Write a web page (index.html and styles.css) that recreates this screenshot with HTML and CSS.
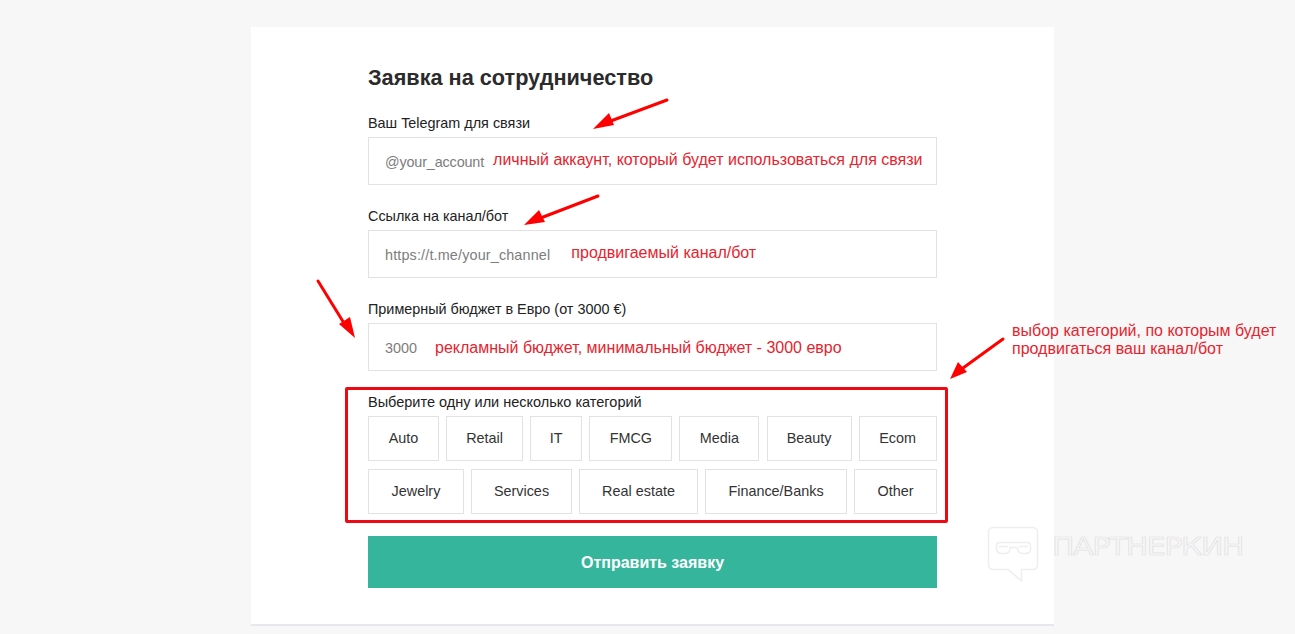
FILE: index.html
```html
<!DOCTYPE html>
<html lang="ru">
<head>
<meta charset="utf-8">
<title>Заявка на сотрудничество</title>
<link rel="stylesheet" href="styles.css">
</head>
<body>
<main class="card">
  <form class="form">
    <h1 class="title">Заявка на сотрудничество</h1>
    <div class="field">
      <div class="label">Ваш Telegram для связи</div>
      <div class="input"><span class="ph ph-account">@your_account</span><span class="note note-high">личный аккаунт, который будет использоваться для связи</span></div>
    </div>
    <div class="field">
      <div class="label">Ссылка на канал/бот</div>
      <div class="input"><span class="ph ph-channel">https://t.me/your_channel</span><span class="note note-high">продвигаемый канал/бот</span></div>
    </div>
    <div class="field">
      <div class="label">Примерный бюджет в Евро (от 3000 €)</div>
      <div class="input"><span class="ph ph-budget">3000</span><span class="note">рекламный бюджет, минимальный бюджет - 3000 евро</span></div>
    </div>
    <div class="cats">
      <div class="label label-cats">Выберите одну или несколько категорий</div>
      <div class="chips">
        <span class="chip c-auto">Auto</span><span class="chip c-retail">Retail</span><span class="chip c-it">IT</span><span class="chip c-fmcg">FMCG</span><span class="chip c-media">Media</span><span class="chip c-beauty">Beauty</span><span class="chip c-ecom">Ecom</span>
      </div>
      <div class="chips">
        <span class="chip c-jewelry">Jewelry</span><span class="chip c-services">Services</span><span class="chip c-estate">Real estate</span><span class="chip c-finance">Finance/Banks</span><span class="chip c-other">Other</span>
      </div>
    </div>
    <div class="submit">Отправить заявку</div>
  </form>
</main>

<div class="redbox"></div>
<svg class="arrows" width="1295" height="634" viewBox="0 0 1295 634" aria-hidden="true">
  <g class="arrow-line">
    <line x1="667" y1="100" x2="608" y2="122"/>
    <line x1="598" y1="196" x2="538" y2="219"/>
    <line x1="318" y1="281" x2="347" y2="328"/>
    <line x1="1003" y1="339" x2="963" y2="368"/>
  </g>
  <g class="arrow-head">
    <polygon points="593,129 609,113 614,125"/>
    <polygon points="524,225 539,210 545,222"/>
    <polygon points="355,338 339,324 350,317"/>
    <polygon points="950,379 958,362 967,372"/>
  </g>
  <g class="wm-line">
    <path d="M993 527.500H1033a4.500 4.500 0 0 1 4.500 4.500V565a4.500 4.500 0 0 1-4.500 4.500H1021.500V581L1008 569.500H993a4.500 4.500 0 0 1-4.500-4.500V532a4.500 4.500 0 0 1 4.500-4.500Z"/>
    <path d="M996.500 546q0-3.500 3.500-3.500H1027q3.500 0 3.500 3.500v3q0 4.500-5 4.500h-3q-5 0-5-6H1010q0 6-5 6h-3q-5.500 0-5.500-4.500Z"/>
    <path d="M999 546.500H1008M1019 546.500H1028"/>
  </g>
</svg>
<div class="wm-text">ПАРТНЕРКИН</div>
<div class="side-note">выбор категорий, по которым будет<br>продвигаться ваш канал/бот</div>
</body>
</html>
```
FILE: styles.css
```css
* { box-sizing: border-box; }
html, body { height: 100%; }
body {
  margin: 0;
  height: 634px;
  overflow: hidden;
  background: #f7f7f7;
  font-family: "Liberation Sans", Arial, sans-serif;
  color: #222;
}
.card {
  width: 803px;
  height: 599px;
  margin: 27px 0 0 251px;
  padding: 37px 117px 0;
  background: #fff;
  border-bottom: 2px solid #e8e8ec;
}
.form { width: 569px; display: flex; flex-direction: column; }
.title {
  margin: 0;
  height: 28px;
  font-size: 21.700px;
  line-height: 28px;
  font-weight: 700;
  color: #2b2b2b;
}
.field { height: 93px; padding-top: 22px; }
.label {
  height: 18px;
  font-size: 14.400px;
  line-height: 18px;
  color: #222;
  margin-bottom: 5px;
}
.input {
  height: 48px;
  border: 1px solid #e2e2e2;
  display: flex;
  align-items: center;
  padding: 2px 0 0 16px;
  background: #fff;
}
.ph { font-size: 14.400px; color: #7d7d7d; }
.ph-account { margin-right: 9px; letter-spacing: -0.15px; }
.ph-channel { margin-right: 21px; letter-spacing: 0.15px; }
.ph-budget { margin-right: 18px; }
.note { font-size: 16px; color: #e8232e; }
.note-high { margin-bottom: 4px; }
.cats { padding-top: 22px; }
.label-cats { margin-bottom: 5px; font-size: 14.500px; }
.chips { display: flex; gap: 7.120px; margin-bottom: 8px; }
.chip {
  height: 45px;
  padding-bottom: 2px;
  border: 1px solid #e2e2e2;
  display: flex;
  align-items: center;
  justify-content: center;
  font-size: 14.400px;
  color: #333;
}
.c-auto { width: 71px; }
.c-retail { width: 77px; }
.c-it { width: 52px; }
.c-fmcg { width: 83px; }
.c-media { width: 80px; }
.c-beauty { width: 85px; }
.c-ecom { width: 78px; }
.c-jewelry { width: 96px; }
.c-services { width: 101px; }
.c-estate { width: 119px; }
.c-finance { width: 142px; }
.c-other { width: 83px; }
.submit {
  margin-top: 14px;
  height: 52px;
  padding-top: 1px;
  background: #35b59b;
  color: #fff;
  font-size: 16px;
  font-weight: 700;
  display: flex;
  align-items: center;
  justify-content: center;
}
.redbox {
  position: absolute;
  left: 345px;
  top: 387px;
  width: 603px;
  height: 136px;
  border: 3px solid #ee0a14;
  border-radius: 2px;
}
.arrows { position: absolute; left: 0; top: 0; pointer-events: none; }
.arrow-line line { stroke: #f00; stroke-width: 3; stroke-linecap: round; }
.arrow-head polygon { fill: #f00; }
.wm-line path { fill: none; stroke: #eeeeee; stroke-width: 1.500; }
.wm-text {
  position: absolute;
  left: 1052px;
  top: 532px;
  font-family: "DejaVu Sans", sans-serif;
  font-size: 25px;
  line-height: 30px;
  color: transparent;
  -webkit-text-stroke: 0.7px #e2e2e2;
  white-space: nowrap;
  letter-spacing: -1.2px;
  transform: scaleX(1.2);
  transform-origin: left center;
}
.side-note {
  position: absolute;
  left: 1012px;
  top: 322px;
  font-size: 16px;
  line-height: 18px;
  color: #e8232e;
  white-space: nowrap;
}
```
